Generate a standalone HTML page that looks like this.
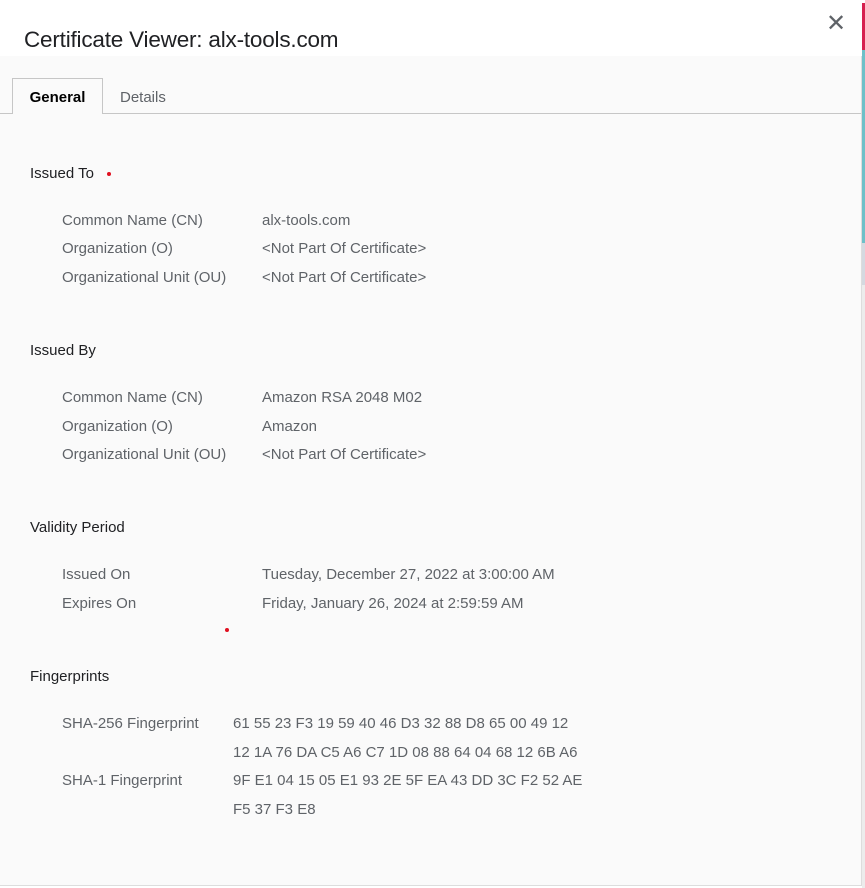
<!DOCTYPE html>
<html><head><style>
body{margin:0;width:865px;height:888px;overflow:hidden;background:#fff;font-family:"Liberation Sans",sans-serif;position:relative}
.title{position:absolute;left:24px;top:27px;font-size:22.5px;color:#202124;letter-spacing:-0.2px}
.close{position:absolute;left:826px;top:9px;font-size:24px;color:#5f6368}
.panel{position:absolute;left:0;top:56px;width:861px;height:829px;background:#fafafa;border-right:1px solid #ddd;border-bottom:1px solid #ddd}
.tabline{position:absolute;left:0;top:113px;width:861px;height:1px;background:#c6c6c6}
.tab{position:absolute;left:12px;top:78px;width:91px;height:36px;border:1px solid #c6c6c6;border-bottom:none;background:#fafafa;box-sizing:border-box;font-weight:bold;font-size:15px;color:#000;text-align:center;line-height:38px}
.tab2{position:absolute;left:120px;top:89px;font-size:15px;color:#5f6368}
.h{position:absolute;left:30px;font-size:15px;color:#202124}
.l{position:absolute;left:62px;font-size:15px;color:#5f6368}
.v{position:absolute;left:262px;font-size:15px;color:#5f6368}
.f{position:absolute;left:233px;font-size:15px;color:#5f6368}
.dot{position:absolute;width:4px;height:4px;border-radius:2px;background:#e01020}
.sb{position:absolute;left:862px;width:3px}
</style></head><body>
<div class="panel"></div>
<div class="title">Certificate Viewer: alx-tools.com</div>
<div class="close">✕</div>
<div class="tabline"></div>
<div class="tab">General</div>
<div class="tab2">Details</div>

<div class="h" style="top:165px">Issued To</div><div class="dot" style="left:107px;top:172px"></div>
<div class="l" style="top:212px">Common Name (CN)</div><div class="v" style="top:212px">alx-tools.com</div>
<div class="l" style="top:240px">Organization (O)</div><div class="v" style="top:240px">&lt;Not Part Of Certificate&gt;</div>
<div class="l" style="top:269px">Organizational Unit (OU)</div><div class="v" style="top:269px">&lt;Not Part Of Certificate&gt;</div>

<div class="h" style="top:342px">Issued By</div>
<div class="l" style="top:389px">Common Name (CN)</div><div class="v" style="top:389px">Amazon RSA 2048 M02</div>
<div class="l" style="top:418px">Organization (O)</div><div class="v" style="top:418px">Amazon</div>
<div class="l" style="top:446px">Organizational Unit (OU)</div><div class="v" style="top:446px">&lt;Not Part Of Certificate&gt;</div>

<div class="h" style="top:519px">Validity Period</div>
<div class="l" style="top:566px">Issued On</div><div class="v" style="top:566px">Tuesday, December 27, 2022 at 3:00:00 AM</div>
<div class="l" style="top:595px">Expires On</div><div class="v" style="top:595px">Friday, January 26, 2024 at 2:59:59 AM</div>
<div class="dot" style="left:225px;top:628px"></div>

<div class="h" style="top:668px">Fingerprints</div>
<div class="l" style="top:715px">SHA-256 Fingerprint</div><div class="f" style="top:715px">61 55 23 F3 19 59 40 46 D3 32 88 D8 65 00 49 12</div>
<div class="f" style="top:744px">12 1A 76 DA C5 A6 C7 1D 08 88 64 04 68 12 6B A6</div>
<div class="l" style="top:772px">SHA-1 Fingerprint</div><div class="f" style="top:772px">9F E1 04 15 05 E1 93 2E 5F EA 43 DD 3C F2 52 AE</div>
<div class="f" style="top:801px">F5 37 F3 E8</div>

<div class="sb" style="top:3px;height:47px;background:#d6204f"></div>
<div class="sb" style="top:50px;height:193px;background:#6ec0c8"></div>
<div class="sb" style="top:243px;height:42px;background:#d5d9e0"></div>
<div class="sb" style="top:285px;height:603px;background:#ececec"></div>
</body></html>
